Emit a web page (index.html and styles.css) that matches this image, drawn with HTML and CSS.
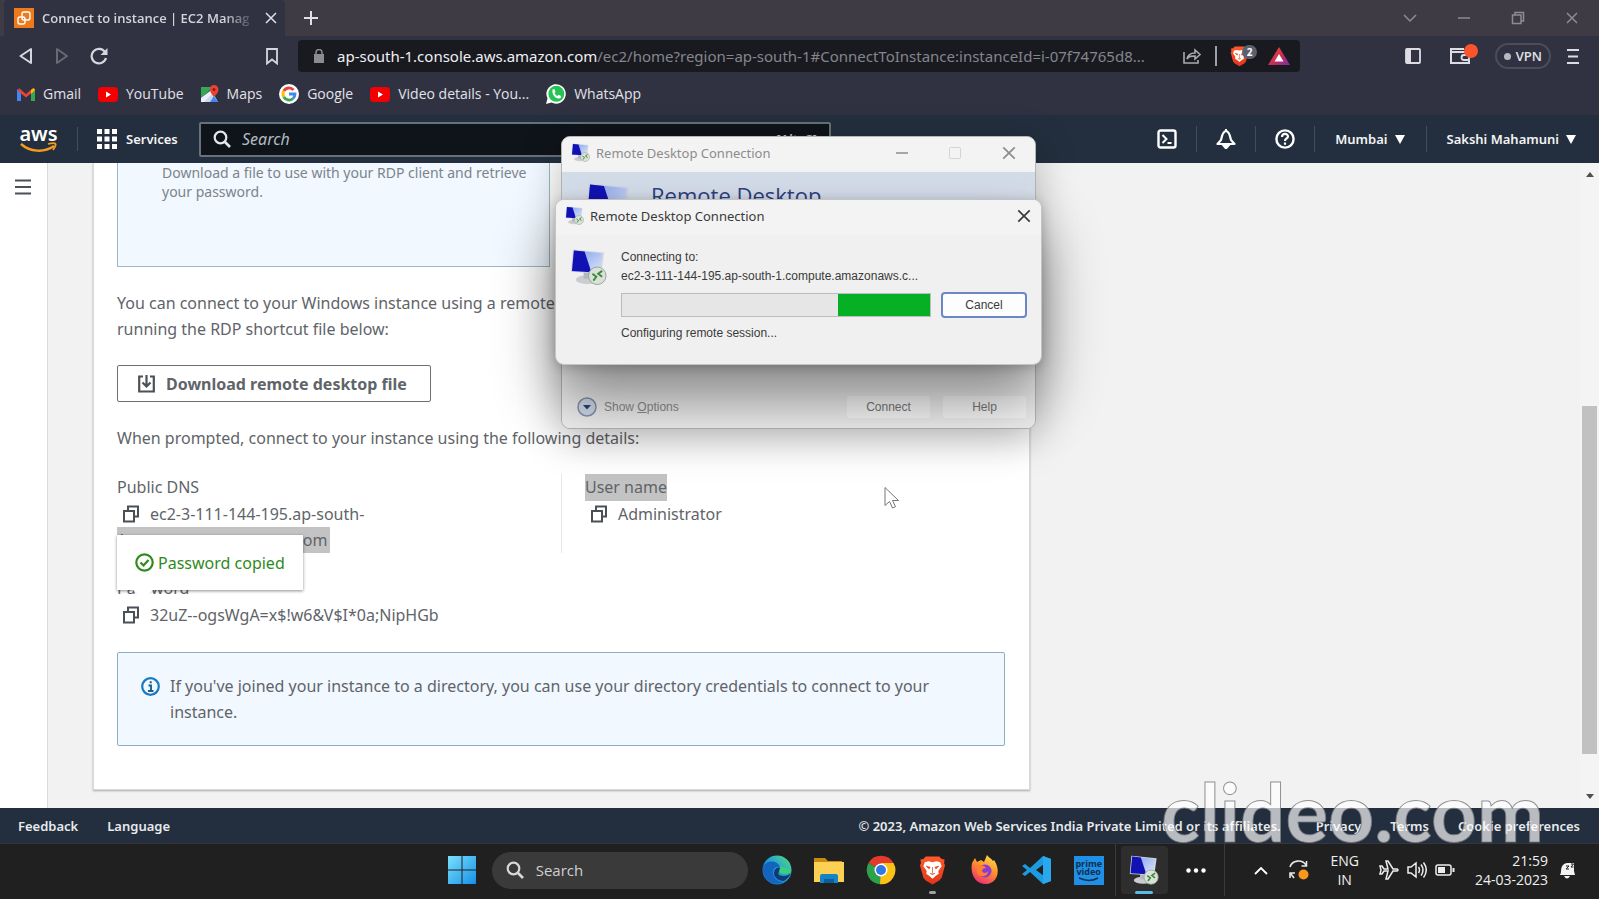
FILE: index.html
```html
<!DOCTYPE html>
<html lang="en">
<head>
<meta charset="utf-8">
<title>Connect to instance | EC2 Management Console</title>
<link rel="stylesheet" href="styles.css">
</head>
<body>
<svg class="defs" aria-hidden="true">
  <defs>
    <linearGradient id="screen" x1="0" y1="0" x2="1" y2="1"><stop offset="0" stop-color="#7f9bea"/><stop offset="1" stop-color="#dbe6fb"/></linearGradient>
    <linearGradient id="win" x1="0" y1="0" x2="1" y2="1"><stop offset="0" stop-color="#7be0fb"/><stop offset="1" stop-color="#1490e8"/></linearGradient>
    <linearGradient id="edge" x1="0" y1="1" x2="1" y2="0"><stop offset="0" stop-color="#1260c4"/><stop offset=".5" stop-color="#1b9de0"/><stop offset="1" stop-color="#5ce070"/></linearGradient>
    <linearGradient id="brave" x1="0" y1="0" x2="0" y2="1"><stop offset="0" stop-color="#ff5a28"/><stop offset="1" stop-color="#e2341c"/></linearGradient>
    <linearGradient id="fox" x1=".8" y1="0" x2=".3" y2="1"><stop offset="0" stop-color="#ffe04a"/><stop offset=".5" stop-color="#ff8a2c"/><stop offset="1" stop-color="#ee2d78"/></linearGradient>
    <linearGradient id="bat" x1="0" y1="0" x2="1" y2="1"><stop offset="0" stop-color="#ff4a1c"/><stop offset=".6" stop-color="#c02c60"/><stop offset="1" stop-color="#6f2fb0"/></linearGradient>
  </defs>
  <symbol id="rdp" viewBox="0 0 38 38">
    <ellipse cx="18" cy="32" rx="12" ry="4.500" fill="#c9ccd0"/>
    <path d="M14 24h10v7H14z" fill="#b4b8be"/>
    <path d="M3 1 35 4 32 26 1 24z" fill="#cfd6e2"/>
    <path d="M4 2 33 5 30 25 2 23z" fill="url(#screen)"/>
    <path d="M4 2 15 3.200 22 24.400 2 23z" fill="#1212b4"/>
    <circle cx="28" cy="28" r="9" fill="#d9e2d9" stroke="#98a398"/>
    <path d="M23 26l4 3-3 4M33 23l-4 3 4 3" fill="none" stroke="#3c8c3c" stroke-width="2"/>
  </symbol>
  <symbol id="yt" viewBox="0 0 20 16"><rect width="20" height="15" y="1" rx="4" fill="#f40000"/><path d="M8 5.500v6l5-3z" fill="#fff"/></symbol>
  <symbol id="copy" viewBox="0 0 16 18"><path d="M5 5V1.500h10v10h-3.500M1 6h10v10.500H1z" fill="none" stroke="#4a5056" stroke-width="2"/></symbol>
  <symbol id="lion" viewBox="0 0 28 30">
    <path d="M7 1h14l2.500 2.500 3 .5-.5 4 1 2-3.500 13-2.500 3-7 4-7-4-2.500-3L1 10l1-2-.5-4 3-.5z" fill="url(#brave)"/>
    <path d="M6 7l4-1 4 1 4-1 4 1 1.500 4-3.500 5 .5 3-3 2-3.500 3-3.500-3-3-2 .5-3L4.500 11z" fill="#fff"/>
    <path d="M7.500 11l4 1.200-1 1.600zM20.500 11l-4 1.200 1 1.600zM14 12v6M11.500 18.500l2.500 1.200 2.500-1.200" fill="#e8451f" stroke="#e8451f" stroke-width=".8"/>
  </symbol>
  <symbol id="glass" viewBox="0 0 18 18"><circle cx="7.500" cy="7.500" r="5.800" fill="none" stroke="currentColor" stroke-width="2.200"/><path d="M12 12l5 5" stroke="currentColor" stroke-width="2.600"/></symbol>
  <symbol id="cross" viewBox="0 0 14 14"><path d="M2 2l10 10M12 2L2 12" stroke="currentColor" stroke-width="1.500"/></symbol>
</svg>

<header class="browser">
  <div class="tabs">
    <div class="tab">
      <svg width="20" height="20" viewBox="0 0 20 20"><rect width="20" height="20" fill="#ee7a1c"/><g fill="none" stroke="#fff" stroke-width="1.400"><rect x="4" y="9" width="7" height="7" rx="2"/><rect x="8" y="4" width="8" height="8" rx="2"/></g></svg>
      <span class="tab-title">Connect to instance | EC2 Manag</span>
      <button class="icon" aria-label="Close tab"><svg class="tab-x" width="14" height="14"><use href="#cross"/></svg></button>
    </div>
    <button class="icon new-tab" aria-label="New tab"><svg width="14" height="14" viewBox="0 0 14 14"><path d="M7 0v14M0 7h14" stroke="#e0e0e6" stroke-width="2"/></svg></button>
    <div class="win-controls">
      <button class="icon" aria-label="Search tabs"><svg width="14" height="14" viewBox="0 0 14 14"><path d="M1 4l6 6 6-6" fill="none" stroke="currentColor" stroke-width="1.500"/></svg></button>
      <button class="icon" aria-label="Minimize"><svg width="14" height="14" viewBox="0 0 14 14"><path d="M1 7h12" stroke="currentColor" stroke-width="1.500"/></svg></button>
      <button class="icon" aria-label="Restore"><svg width="14" height="14" viewBox="0 0 14 14"><path d="M1.500 4h8.500v8.500H1.500zM4 3.500V1.500h8.500V10h-2" fill="none" stroke="currentColor" stroke-width="1.500"/></svg></button>
      <button class="icon" aria-label="Close"><svg width="14" height="14"><use href="#cross"/></svg></button>
    </div>
  </div>
  <div class="toolbar">
    <nav class="nav-buttons">
      <button class="icon" aria-label="Back"><svg width="16" height="18" viewBox="0 0 16 18"><path d="M13 2v14L2.500 9z" fill="none" stroke="#d6d6de" stroke-width="2" stroke-linejoin="round"/></svg></button>
      <button class="icon" aria-label="Forward"><svg width="16" height="18" viewBox="0 0 16 18"><path d="M3 2v14L13 9z" fill="none" stroke="#6a6974" stroke-width="2" stroke-linejoin="round"/></svg></button>
      <button class="icon" aria-label="Reload"><svg width="18" height="18" viewBox="0 0 18 18"><path d="M15 5A7.300 7.300 0 1 0 16 11" fill="none" stroke="#d6d6de" stroke-width="2.200"/><path d="M17.500 1v7h-7z" fill="#d6d6de"/></svg></button>
    </nav>
    <button class="icon bookmark" aria-label="Bookmark this tab"><svg width="12" height="17" viewBox="0 0 12 17"><path d="M1 1h10v14.500l-5-4-5 4z" fill="none" stroke="#d6d6de" stroke-width="1.800"/></svg></button>
    <div class="url-bar">
      <svg width="10" height="14" viewBox="0 0 10 14"><path d="M0 5h10v9H0z" fill="#8b8b92"/><path d="M2 6V3.500a3 3 0 0 1 6 0V6" fill="none" stroke="#8b8b92" stroke-width="1.500"/></svg>
      <div class="url"><span class="host">ap-south-1.console.aws.amazon.com</span>/ec2/home?region=ap-south-1#ConnectToInstance:instanceId=i-07f74765d8...</div>
      <button class="icon" aria-label="Share"><svg width="20" height="16" viewBox="0 0 20 16"><path d="M2 4v11h14v-3M5 11c1-5 4-6 8-6V2l5 4.500-5 4.500V8c-4 0-6 0-8 3z" fill="none" stroke="#a9a9b0" stroke-width="1.600"/></svg></button>
      <span class="bar-line"></span>
      <button class="icon shield" aria-label="Brave Shields"><svg width="19" height="22"><use href="#lion"/></svg><span class="shield-count">2</span></button>
      <button class="icon" aria-label="Brave Rewards"><svg width="22" height="18" viewBox="0 0 22 18"><path d="M11 0l11 18H0z" fill="url(#bat)"/><path d="M11 7l4.500 7.500h-9z" fill="#fff"/></svg></button>
    </div>
    <div class="tool-right">
      <button class="icon" aria-label="Sidebar"><svg width="16" height="16" viewBox="0 0 16 16"><rect x="1" y="1" width="14" height="14" rx="1" fill="none" stroke="#dcdce2" stroke-width="1.800"/><path d="M1 1h5v14H1z" fill="#dcdce2"/></svg></button>
      <button class="icon" aria-label="Wallet"><svg width="30" height="26" viewBox="0 0 30 26"><path d="M18 9H2v11h18v-3M2 9V6h13" fill="none" stroke="#dcdce2" stroke-width="2"/><path d="M20 12h-5a2.500 2.500 0 0 0 0 5h5z" fill="none" stroke="#dcdce2" stroke-width="1.800"/><circle cx="22" cy="8" r="7" fill="#fb542b"/></svg></button>
      <button class="vpn"><span class="vpn-dot"></span>VPN</button>
      <button class="icon" aria-label="Menu"><svg width="12" height="15" viewBox="0 0 12 15"><path d="M0 1h12M1 7.500h10M0 14h12" stroke="#dcdce2" stroke-width="2"/></svg></button>
    </div>
  </div>
  <nav class="bookmarks">
    <a href="#"><svg width="18" height="14" viewBox="0 0 18 14"><path d="M0 2v12h4V5z" fill="#4285f4"/><path d="M18 2v12h-4V5z" fill="#34a853"/><path d="M2 1l7 6 7-6 1 3-8 6.500L1 4z" fill="#ea4335"/><path d="M14 3l3-2 1 2-4 4z" fill="#fbbc04"/></svg>Gmail</a>
    <a href="#"><svg width="20" height="16"><use href="#yt"/></svg>YouTube</a>
    <a href="#"><svg width="18" height="18" viewBox="0 0 18 18"><path d="M0 2h12L0 14z" fill="#34a853"/><path d="M0 17L11 6l6 11z" fill="#c9d6e8"/><path d="M0 13L13 3v4L3 17H0z" fill="#eef"/><path d="M9 17l4-6 4 6z" fill="#4285f4"/><path d="M13 0a4.500 4.500 0 0 1 4.500 4.500C17.500 8 13 12 13 12S9 8 9 4.500A4 4 0 0 1 13 0z" fill="#ea4335"/><circle cx="13" cy="4.500" r="1.500" fill="#8c1c14"/></svg>Maps</a>
    <a href="#"><svg width="20" height="20" viewBox="0 0 20 20"><circle cx="10" cy="10" r="10" fill="#fff"/><g fill="none" stroke-width="2.800"><path d="M14.500 6A6 6 0 0 0 4.800 7" stroke="#ea4335"/><path d="M4.800 7a6 6 0 0 0 0 6" stroke="#fbbc04"/><path d="M4.800 13a6 6 0 0 0 9.200 1.500" stroke="#34a853"/><path d="M14 14.500A6 6 0 0 0 16 10h-6" stroke="#4285f4"/></g></svg>Google</a>
    <a href="#"><svg width="20" height="16"><use href="#yt"/></svg>Video details - You...</a>
    <a href="#"><svg width="20" height="20" viewBox="0 0 20 20"><path d="M0 20l1.500-5.500A9.700 9.700 0 1 1 5.500 18.500z" fill="#fff"/><circle cx="10.300" cy="9.800" r="8" fill="#25c254"/><path d="M6.500 5.500l2-.5 1 3-1 1c.5 1.500 1.500 2.300 3 3l1-1.300 2.600 1.300-.5 2C10 16 5.500 10.500 6.500 5.500z" fill="#fff"/></svg>WhatsApp</a>
  </nav>
</header>

<div class="aws-header">
  <a class="aws-logo" href="#"><span>aws</span><svg width="37" height="11" viewBox="0 0 37 11"><path d="M1 2c9 8 23 9 33 2" fill="none" stroke="#f79a1f" stroke-width="2.500"/><path d="M28 2c4-1 7-1 7.500 0s-1 4-2.500 6" fill="none" stroke="#f79a1f" stroke-width="1.800"/></svg></a>
  <span class="sep"></span>
  <button class="services"><svg width="20" height="20" viewBox="0 0 20 20" fill="#fff"><path d="M0 0h5v5H0zM7.500 0h5v5h-5zM15 0h5v5h-5zM0 7.500h5v5H0zM7.500 7.500h5v5h-5zM15 7.500h5v5h-5zM0 15h5v5H0zM7.500 15h5v5h-5zM15 15h5v5h-5z"/></svg>Services</button>
  <label class="aws-search"><svg width="18" height="18"><use href="#glass"/></svg><input type="text" placeholder="Search" aria-label="Search"><kbd>[Alt+S]</kbd></label>
  <div class="aws-tools">
    <button class="icon" aria-label="CloudShell"><svg width="20" height="20" viewBox="0 0 20 20"><rect x="1.500" y="1.500" width="17" height="17" rx="2" fill="none" stroke="#fff" stroke-width="2.400"/><path d="M5.500 6l4 4-4 4M10.500 14h4" fill="none" stroke="#fff" stroke-width="2"/></svg></button>
    <button class="icon" aria-label="Notifications"><svg width="20" height="20" viewBox="0 0 20 20"><path d="M10 2C6 3 6 8 5 11l-3.500 4h17L15 11c-1-3-1-8-5-9z" fill="none" stroke="#fff" stroke-width="2.200" stroke-linejoin="round"/><path d="M10 0v3M7 16h6l-3 3.500z" stroke="#fff" stroke-width="2" fill="#fff"/></svg></button>
    <button class="icon" aria-label="Help"><svg width="20" height="20" viewBox="0 0 20 20"><circle cx="10" cy="10" r="8.600" fill="none" stroke="#fff" stroke-width="2.400"/><path d="M7 8c0-4 6-4 6-.5 0 2-3 2-3 4.500M10 13.500v2.300" fill="none" stroke="#fff" stroke-width="2.200"/></svg></button>
  </div>
  <button class="menu region">Mumbai<svg width="10" height="9" viewBox="0 0 10 9"><path d="M0 0h10L5 9z" fill="#fff"/></svg></button>
  <button class="menu account">Sakshi Mahamuni<svg width="10" height="9" viewBox="0 0 10 9"><path d="M0 0h10L5 9z" fill="#fff"/></svg></button>
</div>

<div class="page">
  <aside class="side"><button class="icon" aria-label="Open navigation"><svg width="16" height="16" viewBox="0 0 16 16"><path d="M0 1.500h16M0 8h16M0 14.500h16" stroke="#4b5157" stroke-width="2"/></svg></button></aside>
  <main class="content">
    <section class="card">
      <div class="tile">Download a file to use with your RDP client and retrieve your password.</div>
      <p>You can connect to your Windows instance using a remote desktop client of your choice, and by downloading and<br>running the RDP shortcut file below:</p>
      <button class="download"><svg width="17" height="18" viewBox="0 0 17 18"><path d="M5 1.500H1.200v15h14.600v-15H12M8.500 0v11M4.500 7.500l4 4 4-4" fill="none" stroke="#4b5157" stroke-width="2.200"/></svg>Download remote desktop file</button>
      <p>When prompted, connect to your instance using the following details:</p>
      <div class="details">
        <div class="detail">
          <div class="label">Public DNS</div>
          <div class="value"><svg class="copy" width="16" height="18"><use href="#copy"/></svg>ec2-3-111-144-195.ap-south-<br><span class="selected">1.compute.amazonaws.com</span></div>
        </div>
        <div class="detail second">
          <div class="label"><span class="selected">User name</span></div>
          <div class="value"><svg class="copy" width="16" height="18"><use href="#copy"/></svg>Administrator</div>
        </div>
      </div>
      <div class="password">
        <div class="label">Password</div>
        <div class="value"><svg class="copy" width="16" height="18"><use href="#copy"/></svg>32uZ--ogsWgA=x$!w6&amp;V$I*0a;NipHGb</div>
        <div class="popover" role="status"><svg width="19" height="19" viewBox="0 0 19 19"><circle cx="9.500" cy="9.500" r="8.200" fill="none" stroke="#2f8a1c" stroke-width="2.200"/><path d="M5.500 9.500l3 3 5-5.500" fill="none" stroke="#2f8a1c" stroke-width="2.200"/></svg>Password copied</div>
      </div>
      <div class="alert"><svg width="19" height="19" viewBox="0 0 19 19"><circle cx="9.500" cy="9.500" r="8.300" fill="none" stroke="#1a7abf" stroke-width="2.200"/><path d="M7.500 8.500h2.500v5M7 14h5.500M8.700 5.300h2" fill="none" stroke="#1a5f92" stroke-width="1.900"/></svg><span>If you've joined your instance to a directory, you can use your directory credentials to connect to your instance.</span></div>
    </section>
  </main>
  <div class="scrollbar"><svg width="8" height="5" viewBox="0 0 8 5"><path d="M0 5h8L4 0z" fill="#505050"/></svg><div class="track"><div class="thumb"></div></div><svg width="8" height="5" viewBox="0 0 8 5"><path d="M0 0h8L4 5z" fill="#505050"/></svg></div>
</div>

<footer class="aws-footer">
  <a href="#">Feedback</a><a href="#">Language</a>
  <span class="copyright">© 2023, Amazon Web Services India Private Limited or its affiliates.</span>
  <a href="#">Privacy</a><a href="#">Terms</a><a href="#">Cookie preferences</a>
</footer>

<div class="taskbar">
  <div class="apps">
    <button class="icon" aria-label="Start"><svg width="28" height="28" viewBox="0 0 28 28"><path d="M0 0h13.500v13.500H0zM14.500 0H28v13.500H14.500zM0 14.500h13.500V28H0zM14.500 14.500H28V28H14.500z" fill="url(#win)"/></svg></button>
    <label class="task-search"><svg width="18" height="18"><use href="#glass"/></svg><input type="text" placeholder="Search" aria-label="Search Windows"></label>
    <div class="pinned">
      <button class="icon" aria-label="Edge"><svg width="30" height="30" viewBox="0 0 30 30"><circle cx="15" cy="15" r="14.500" fill="url(#edge)"/><path d="M1 12c4-8 16-7 17 1-3-2-8 0-7 6 1 5 5 8 10 8-10 5-21-3-20-15z" fill="#1464be"/><path d="M18 13c0 4-3 5-1 7 4 2 9 1 12-2-1 3-4 6-7 8-6 0-10-4-10-8 0-4 3-6 6-5z" fill="#123a70"/><path d="M18 11c1 3-2 5 0 7 4 2 10 1 11.500-3" fill="#3ccf7c"/></svg></button>
      <button class="icon" aria-label="File Explorer"><svg width="30" height="28" viewBox="0 0 30 28"><path d="M0 2h11l3 3h14v6H0z" fill="#c88a14"/><path d="M0 6h30v20H0z" fill="#fcd053"/><path d="M6 27v-7q0-2 2-2h14q2 0 2 2v7z" fill="#1583c8"/><path d="M10 23h10v4H10z" fill="#0d5f9c"/></svg></button>
      <button class="icon" aria-label="Chrome"><svg width="30" height="30" viewBox="0 0 30 30"><path d="M15 15L2.500 8A14.300 14.300 0 0 1 27.500 8z" fill="#e23b2e"/><path d="M15 15L2.500 8A14.300 14.300 0 0 0 14 29.300l7-11z" fill="#2da04a"/><path d="M15 15L14 29.300A14.300 14.300 0 0 0 27.500 8H15z" fill="#fbc116"/><circle cx="15" cy="15" r="6.500" fill="#fff"/><circle cx="15" cy="15" r="5" fill="#2f78e6"/></svg></button>
      <button class="icon running" aria-label="Brave"><svg width="27" height="30"><use href="#lion"/></svg></button>
      <button class="icon" aria-label="Firefox"><svg width="30" height="30" viewBox="0 0 30 30"><path d="M2 8l3-5 2 4 4-2 3 2 3-7c2 3 4 3 6 6l1-1c7 10 4 23-8 24C5 29 0 19 2 8z" fill="url(#fox)"/><circle cx="15" cy="16" r="6.500" fill="#8a3bd0"/><path d="M7 12c4-3 8-1 9 1-2 0-4 1-4 3 1 3 5 2 6 0 0 6-8 7-11 2z" fill="#ff8030"/></svg></button>
      <button class="icon" aria-label="Visual Studio Code"><svg width="30" height="30" viewBox="0 0 30 30"><path d="M21 1l8 3v22l-8 3L8 17l-5 4-3-2 5-4-5-4 3-2 5 4zm1 8l-8 6 8 6z" fill="#1c9be0"/><path d="M21 1l8 3v22l-8 3z" fill="#2aa8ee"/></svg></button>
      <button class="icon" aria-label="Prime Video"><span class="prime">prime<br>video<svg width="20" height="5" viewBox="0 0 20 5"><path d="M0 1q10 5 19 0" fill="none" stroke="#0c2f4d" stroke-width="1.500"/></svg></span></button>
    </div>
    <div class="active-app"><button class="icon tile-on" aria-label="Remote Desktop Connection"><svg width="30" height="30"><use href="#rdp"/></svg></button><button class="icon" aria-label="More apps"><svg width="20" height="5" viewBox="0 0 20 5" fill="#fff"><circle cx="2.500" cy="2.500" r="2.200"/><circle cx="10" cy="2.500" r="2.200"/><circle cx="17.500" cy="2.500" r="2.200"/></svg></button></div>
  </div>
  <div class="tray">
    <button class="icon" aria-label="Hidden icons"><svg width="14" height="9" viewBox="0 0 14 9"><path d="M1 8l6-6 6 6" fill="none" stroke="#fff" stroke-width="1.800"/></svg></button>
    <button class="icon" aria-label="Update"><svg width="22" height="22" viewBox="0 0 22 22"><path d="M2 8C4 1 14 0 18 6M18.500 2v5h-5M2 19v-5h5M3 15l3 4" fill="none" stroke="#e8e8e8" stroke-width="1.600"/><circle cx="15.500" cy="15.500" r="5" fill="#f8991d"/></svg></button>
    <button class="lang">ENG<br>IN</button>
    <button class="status" aria-label="System status">
      <svg width="20" height="20" viewBox="0 0 20 20"><path d="M1 6h2l2 3h4L7 1h2l5 8h4q2 1 0 2h-4l-5 8H7l2-8H5l-2 3H1l1-4z" fill="none" stroke="#eee" stroke-width="1.500"/></svg>
      <svg width="20" height="18" viewBox="0 0 20 18"><path d="M1 6h3l5-4v14l-5-4H1zM11.500 6q2 3 0 6M14 3.500q4 5.500 0 11M16.500 1.500q5.500 7.500 0 15" fill="none" stroke="#eee" stroke-width="1.500"/></svg>
      <svg width="20" height="12" viewBox="0 0 20 12"><rect x="1" y="1" width="15" height="10" rx="2" fill="none" stroke="#eee" stroke-width="1.500"/><path d="M3 3h7v6H3zM17.500 4h2v4h-2z" fill="#eee"/></svg>
    </button>
    <button class="clock">21:59<br>24-03-2023</button>
    <button class="icon" aria-label="Notification center"><svg width="18" height="20" viewBox="0 0 18 20"><path d="M2 15c2-3 0-7 3-10 2-2 4-2 6-2h5v8l1 4zM6 16h6q-3 5-6 0z" fill="#f2f2f2"/><path d="M8 6h3l-3 3h3M13 4h2.500l-2.500 3h2.500" fill="none" stroke="#202020"/></svg></button>
  </div>
</div>

<section class="window back-window" aria-label="Remote Desktop Connection">
  <div class="title"><svg width="19" height="19"><use href="#rdp"/></svg><span>Remote Desktop Connection</span>
    <div class="title-buttons"><button class="icon" aria-label="Minimize"><svg width="14" height="14" viewBox="0 0 14 14"><path d="M1 7h12" stroke="currentColor" stroke-width="1.500"/></svg></button><button class="icon dim" aria-label="Maximize"><svg width="14" height="14" viewBox="0 0 14 14"><rect x="1.500" y="1.500" width="11" height="11" rx="1" fill="none" stroke="currentColor"/></svg></button><button class="icon" aria-label="Close"><svg width="16" height="16"><use href="#cross"/></svg></button></div>
  </div>
  <div class="banner"><svg width="48" height="48"><use href="#rdp"/></svg><span>Remote Desktop</span></div>
  <div class="window-foot"><button class="options"><svg width="20" height="20" viewBox="0 0 20 20"><circle cx="10" cy="10" r="9" fill="#d2dcea" stroke="#8494ac" stroke-width="1.500"/><path d="M6 8h8l-4 4.500z" fill="#26447e"/></svg><span>Show <u>O</u>ptions</span></button><button class="push">Connect</button><button class="push">Help</button></div>
</section>

<section class="window front-window" role="dialog" aria-label="Connecting">
  <div class="title"><svg width="19" height="19"><use href="#rdp"/></svg><span>Remote Desktop Connection</span>
    <div class="title-buttons"><button class="icon" aria-label="Close"><svg width="16" height="16"><use href="#cross"/></svg></button></div>
  </div>
  <div class="dialog-body">
    <svg width="37" height="38"><use href="#rdp"/></svg>
    <div class="dialog-main">
      <div>Connecting to:</div>
      <div>ec2-3-111-144-195.ap-south-1.compute.amazonaws.c...</div>
      <div class="progress-row"><div class="progress" role="progressbar" aria-label="Connecting"><div class="chunk"></div></div><button class="cancel">Cancel</button></div>
      <div>Configuring remote session...</div>
    </div>
  </div>
</section>

<svg class="cursor" width="16" height="24" viewBox="0 0 16 24"><path d="M1 1.500v18l4.500-4 3 6.500 3-1.300-3-6.200h6z" fill="#fff" stroke="#777"/></svg>
<div class="watermark">clideo.com</div>
</body>
</html>
```

FILE: styles.css
```css
* { box-sizing: border-box; }

body {
  margin: 0;
  height: 100vh;
  display: flex;
  flex-direction: column;
  position: relative;
  overflow: hidden;
  font-family: "Noto Sans", "Open Sans", sans-serif;
  font-size: 16px;
  color: #5f6469;
}

svg { display: block; flex: none; }
.defs { position: absolute; width: 0; height: 0; }
button { font: inherit; color: inherit; background: none; border: 0; padding: 0; }
input { font: inherit; color: inherit; background: none; border: 0; padding: 0; min-width: 0; outline: 0; }
a { color: inherit; text-decoration: none; }
.icon { display: flex; align-items: center; justify-content: center; flex: none; }

/* Browser chrome */
.browser { background: #303241; color: #e2e2e8; font-family: "Open Sans", sans-serif; font-size: 14px; }
.tabs { display: flex; align-items: center; height: 36px; background: #3f3b45; padding-left: 4px; }
.tab { display: flex; align-items: center; gap: 8px; width: 281px; height: 36px; padding: 0 7px 0 10px; background: #303241; border-radius: 4px 4px 0 0; color: #d4d4dc; }
.tab-title { flex: 1; overflow: hidden; white-space: nowrap; font-size: 13px; font-weight: 600; mask-image: linear-gradient(90deg, #000 85%, transparent); }
.tab-x { color: #e0e0e6; }
.new-tab { margin-left: 19px; }
.win-controls { display: flex; gap: 40px; margin-left: auto; padding-right: 20px; color: #8e8b93; }
.toolbar { display: flex; align-items: center; height: 40px; }
.nav-buttons { display: flex; gap: 20px; padding-left: 18px; }
.bookmark { margin: 0 20px 0 158px; }
.url-bar { display: flex; align-items: center; gap: 13px; height: 32px; flex: 0 1 1002px; padding: 0 10px 0 16px; background: #191a20; border-radius: 4px; min-width: 0; }
.url { flex: 1; overflow: hidden; white-space: nowrap; font-family: "Noto Sans", sans-serif; font-size: 15px; color: #85858d; }
.host { color: #f0f0f4; }
.bar-line { width: 2px; height: 20px; background: #a0a0a6; }
.shield { position: relative; margin-right: 6px; }
.shield-count { position: absolute; left: 12px; top: 0; width: 15px; height: 14px; border-radius: 7px; background: #5c606c; color: #fff; font-size: 10px; line-height: 14px; font-weight: 700; }
.tool-right { display: flex; align-items: center; gap: 16px; margin-left: auto; padding-right: 20px; }
.tool-right .icon:first-child { margin-right: 12px; }
.vpn { display: flex; align-items: center; gap: 5px; height: 26px; padding: 0 7px; border: 2px solid #4c4d5a; border-radius: 13px; font-size: 13px; font-weight: 600; }
.vpn-dot { width: 7px; height: 7px; border-radius: 50%; background: #b8b8c0; }
.bookmarks { display: flex; align-items: center; gap: 17px; height: 39px; padding: 0 0 4px 17px; white-space: nowrap; }
.bookmarks a { display: flex; align-items: center; gap: 8px; }

/* AWS navigation */
.aws-header { display: flex; align-items: center; height: 48px; flex: none; background: #232f3e; color: #f4f4f4; font-size: 13px; font-weight: 600; }
.aws-logo { display: flex; flex-direction: column; align-items: center; width: 77px; color: #fff; font-size: 20px; line-height: 16px; }
.sep { width: 1px; height: 24px; background: #414d5c; }
.services { display: flex; align-items: center; gap: 9px; width: 121px; padding-left: 19px; }
.aws-search { display: flex; align-items: center; gap: 11px; flex: 0 1 632px; height: 35px; padding: 0 12px; background: #0f141a; border: 2px solid #687078; border-radius: 2px; color: #e4e8ea; }
.aws-search input { flex: 1; font-size: 16px; font-style: italic; font-weight: 400; }
.aws-search input::placeholder { color: #b4bcc0; opacity: 1; }
.aws-search kbd { font: inherit; color: #b4bcc0; }
.aws-tools { display: flex; margin-left: auto; }
.aws-tools .icon { width: 59px; height: 26px; border-right: 1px solid #414d5c; }
.menu { display: flex; align-items: center; height: 26px; white-space: nowrap; }
.menu svg { margin-left: 7px; }
.region { padding: 0 21px 0 20px; border-right: 1px solid #414d5c; }
.account { padding: 0 23px 0 20px; }

/* Page */
.page { display: flex; flex: 1; min-height: 0; background: #f2f2f2; }
.side { width: 48px; background: #fff; border-right: 1px solid #d5dbdb; padding: 16px 0 0 15px; }
.content { flex: 1; min-width: 0; padding-left: 45px; overflow: hidden; }
.card { width: 61.2%; min-width: 937px; padding: 0 24px 43px 23px; background: #fff; border: 1px solid #d9d9d9; border-top: 0; box-shadow: 0 1px 2px rgba(0, 0, 0, .3); line-height: 26px; }
.tile { width: 433px; height: 104px; padding: 0 10px 0 44px; background: #f1f8ff; border: 1px solid #9ab9c4; border-top: 0; font-size: 14px; line-height: 19px; color: #7c848a; }
.card p { margin: 23px 0; }
.download { display: flex; align-items: center; gap: 11px; height: 37px; padding: 0 23px 0 20px; border: 1px solid #6a7075; border-radius: 2px; font-weight: 700; }
.details { display: flex; }
.detail { width: 446px; }
.second { padding-left: 23px; border-left: 1px solid #e6e9e9; }
.label { line-height: 27px; }
.value { line-height: 26px; }
.copy { display: inline-block; vertical-align: -3px; margin: 0 11px 0 6px; }
.selected { display: inline-block; background: #c3c3c3; }
.value .selected { padding-right: 3px; }
.password { position: relative; margin: 22px 0 24px; }
.popover { position: absolute; left: 0; bottom: 38px; display: flex; align-items: center; gap: 4px; height: 55px; padding: 0 18px; background: #fff; color: #2f8a1c; box-shadow: 0 1px 3px rgba(0, 0, 0, .45); white-space: nowrap; }
.popover::after { content: ""; position: absolute; left: 16px; top: 55px; border: 10px solid transparent; border-top-color: #fff; border-bottom: 0; }
.alert { display: flex; gap: 10px; padding: 20px 23px; background: #f1f8ff; border: 1px solid #8caec4; border-radius: 2px; }
.alert svg { margin-top: 4px; }
.scrollbar { display: flex; flex-direction: column; align-items: center; justify-content: space-between; width: 19px; padding: 9px 0; background: #f4f4f4; }
.track { flex: 1; width: 15px; padding: 229px 0 40px; }
.thumb { height: 100%; background: #c1c1c1; }

.aws-footer { display: flex; align-items: center; gap: 29px; flex: none; height: 35px; padding: 0 19px 0 18px; background: #232f3e; color: #e8eaec; font-size: 13px; font-weight: 600; white-space: nowrap; }
.copyright { margin: 0 6px 0 auto; }

/* Taskbar */
.taskbar { display: flex; flex: none; align-items: center; height: 56px; padding-bottom: 3px; background: #202020; border-top: 1px solid #34383c; color: #f0f0f0; font-family: "Open Sans", sans-serif; font-size: 14px; }
.apps { display: flex; align-items: center; padding-left: 28vw; height: 100%; }
.task-search { display: flex; align-items: center; gap: 12px; width: 256px; height: 37px; margin-left: 16px; padding: 0 14px; border-radius: 19px; background: #3a3a3a; color: #d8d8d8; }
.task-search input { width: 100%; font-size: 15px; }
.task-search input::placeholder { color: #d0d0d0; opacity: 1; }
.pinned { display: flex; gap: 2px; padding: 0 1px 0 4px; }
.pinned .icon { width: 50px; height: 48px; }
.running { position: relative; }
.running::after, .tile-on::after { content: ""; position: absolute; bottom: 0; width: 7px; height: 3px; border-radius: 2px; background: #a0a0a0; }
.prime { width: 30px; height: 29px; padding: 4px 0; background: #1f90e6; color: #0c2f4d; font-size: 9px; line-height: 8px; font-weight: 700; text-align: center; }
.prime svg { margin: 1px auto; }
.active-app { display: flex; align-items: center; gap: 18px; height: 100%; padding: 0 18px 0 5px; border: solid #3a3a3a; border-width: 0 1px; }
.tile-on { position: relative; width: 47px; height: 48px; border-radius: 4px; background: #2e2e2e; }
.tile-on::after { width: 18px; background: #5cb8e6; }
.tray { display: flex; align-items: center; margin-left: auto; padding-right: 23px; gap: 20px; line-height: 19px; }
.lang { text-align: center; }
.status { display: flex; align-items: center; gap: 8px; }
.clock { text-align: right; margin-right: -10px; }

/* Remote Desktop windows */
.window { position: absolute; border-radius: 9px; overflow: hidden; background: #f0f0f0; color: #3a3a3a; font-family: "Liberation Sans", Arial, sans-serif; font-size: 12px; }
.title { display: flex; align-items: center; gap: 6px; height: 35px; padding: 0 9px 4px; background: #f3f3f3; font-family: "Noto Sans", sans-serif; font-size: 13px; white-space: nowrap; }
.title-buttons { display: flex; align-items: center; gap: 39px; margin-left: auto; }
.back-window { left: 561px; top: 136px; width: 475px; height: 293px; display: flex; flex-direction: column; border: 1px solid #b4b4b4; box-shadow: 0 10px 40px rgba(0, 0, 0, .25); color: #8c8c8c; }
.back-window .title { padding-right: 18px; }
.dim { opacity: .3; }
.banner { display: flex; gap: 18px; flex: 1; padding: 10px 23px; background: linear-gradient(#d3dce9, #e6ecf4); color: #2c3f82; font-family: "Open Sans", sans-serif; font-size: 22px; line-height: 26px; }
.window-foot { display: flex; align-items: center; gap: 13px; height: 72px; padding: 30px 9px 0 15px; background: #f0f0f0; }
.options { display: flex; align-items: center; gap: 7px; margin-right: auto; }
.push { width: 83px; height: 22px; background: #fafafa; border-radius: 3px; color: #777; }
.front-window { left: 555px; top: 199px; width: 487px; height: 166px; border: 1px solid #c4c4c4; box-shadow: 0 34px 60px rgba(0, 0, 0, .45), 0 2px 12px rgba(0, 0, 0, .2); }
.dialog-body { display: flex; gap: 14px; padding: 13px 14px 0; line-height: 19px; }
.dialog-main { flex: 1; }
.progress-row { display: flex; justify-content: space-between; align-items: center; margin: 6px 0; }
.progress { display: flex; justify-content: flex-end; width: 310px; height: 24px; background: #e6e6e6; border: 1px solid #bcbcbc; }
.chunk { width: 30%; background: #06b025; }
.cancel { width: 86px; height: 26px; background: #fdfdfd; border: 2px solid #6d87c4; border-radius: 4px; }

.cursor { position: absolute; left: 884px; top: 486px; }
.watermark { position: absolute; right: 55px; bottom: 46px; font-family: Lato, sans-serif; font-size: 80px; font-weight: 700; line-height: 84px; color: rgba(255, 255, 255, .68); -webkit-text-stroke: 1px rgba(120, 120, 125, .8); pointer-events: none; }
```
